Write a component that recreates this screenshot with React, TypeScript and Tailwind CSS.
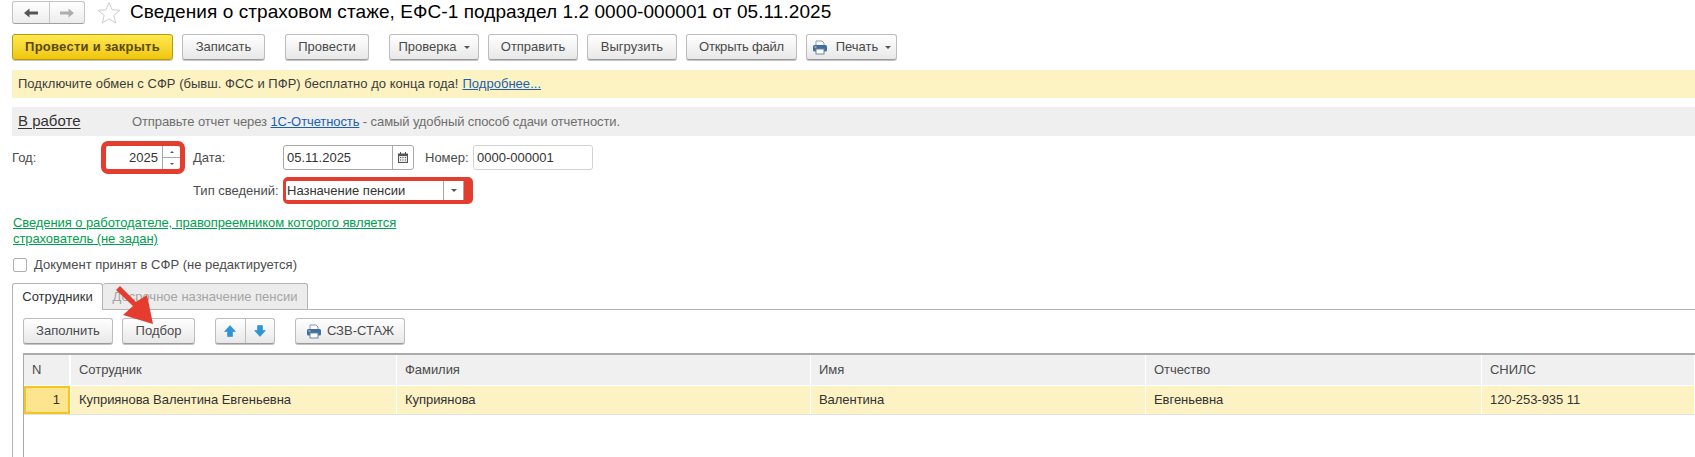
import { ReactNode } from "react";

const COLUMNS = ["Сотрудник", "Фамилия", "Имя", "Отчество", "СНИЛС"];
const ROW = ["Куприянова Валентина Евгеньевна", "Куприянова", "Валентина", "Евгеньевна", "120-253-935 11"];

function Btn({ className = "", children }: { className?: string; children: ReactNode }) {
  return (
    <div className={"flex h-[26px] shrink-0 items-center justify-center rounded-[3px] border border-[#bdbdbd] border-b-[#9a9a9a] bg-gradient-to-b from-white to-[#e8e8e8] text-[#4a4a4a] shadow-[0_1px_0_#c4c4c4] " + className}>
      {children}
    </div>
  );
}

function Caret() {
  return <span className="ml-[7px] mt-px h-0 w-0 border-x-[3px] border-t-[3px] border-x-transparent border-t-[#555]" />;
}

function PrinterIcon() {
  return (
    <svg width="16" height="15" viewBox="0 0 16 15" className="shrink-0">
      <path d="M4 1h6l2 2v3H4z" fill="#fff" stroke="#8a9bb0" />
      <rect x="1" y="5" width="14" height="6.5" rx="1.5" fill="#3f6f9f" />
      <rect x="4" y="9" width="8" height="5" fill="#fff" stroke="#6d86a3" />
      <rect x="2.5" y="6.5" width="2" height="1" fill="#cfe0ef" />
    </svg>
  );
}

function SideArrow({ left, color }: { left?: boolean; color: string }) {
  return (
    <svg width="14" height="10" viewBox="0 0 14 10" className={left ? "" : "rotate-180"}>
      <path d="M0 5 5.5 0.5V3.5H14V6.5H5.5V9.5Z" fill={color} />
    </svg>
  );
}

function VertArrow({ up }: { up?: boolean }) {
  return (
    <svg width="12" height="12" viewBox="0 0 12 12" className={up ? "" : "rotate-180"}>
      <path d="M6 0.5 11.5 6.5H8.5V11.5H3.5V6.5H0.5Z" fill="#2e94d8" stroke="#2581c4" strokeWidth="0.5" />
    </svg>
  );
}

export default function App() {
  return (
    <div className="relative flex h-[457px] w-[1695px] flex-col overflow-hidden bg-white pl-3 pt-px font-['Liberation_Sans',Arial,sans-serif] text-[13px] text-[#4b4b4b]">
      {/* Header */}
      <div className="flex h-[23px] shrink-0 items-center">
        <div className="flex h-[23px] w-[73px] rounded-[3px] border border-[#c4c4c4] border-b-[#a0a0a0] bg-gradient-to-b from-white to-[#ececec]">
          <div className="flex w-[37px] items-center justify-center border-r border-[#c8c8c8]">
            <SideArrow left color="#555555" />
          </div>
          <div className="flex flex-1 items-center justify-center">
            <SideArrow color="#aeaeae" />
          </div>
        </div>
        <svg width="24" height="23" viewBox="0 0 24 23" className="ml-[12px]">
          <path d="M12 1.5 15 8.7 22.8 9.3 16.8 14.4 18.7 22 12 17.9 5.3 22 7.2 14.4 1.2 9.3 9 8.7Z" fill="#fff" stroke="#c9ced3" />
        </svg>
        <h1 className="ml-[9px] text-[19px] font-normal tracking-[0.07px] text-black">
          Сведения о страховом стаже, ЕФС-1 подраздел 1.2 0000-000001 от 05.11.2025
        </h1>
      </div>

      {/* Toolbar */}
      <div className="mt-[10px] flex shrink-0">
        <div className="flex h-[26px] w-[161px] items-center justify-center rounded-[3px] border border-[#b39a10] bg-gradient-to-b from-[#ffe94d] to-[#f0c600] font-bold tracking-[0.25px] text-[#5a4a00] shadow-[0_1px_0_#c4c4c4]">
          Провести и закрыть
        </div>
        <Btn className="ml-[9px] w-[83px]">Записать</Btn>
        <Btn className="ml-[20px] w-[84px]">Провести</Btn>
        <Btn className="ml-[20px] w-[90px]">Проверка<Caret /></Btn>
        <Btn className="ml-[9px] w-[90px]">Отправить</Btn>
        <Btn className="ml-[9px] w-[90px]">Выгрузить</Btn>
        <Btn className="ml-[9px] w-[111px] tracking-[-0.2px]">Открыть файл</Btn>
        <Btn className="ml-[9px] w-[91px]">
          <PrinterIcon />
          <span className="ml-2">Печать</span>
          <Caret />
        </Btn>
      </div>

      {/* Notice */}
      <div className="mt-[10px] flex h-[28px] shrink-0 items-center bg-[#fdf3c2] pl-[6px] tracking-[0.03px] text-[#3c3c3c]">
        Подключите обмен с СФР (бывш. ФСС и ПФР) бесплатно до конца года!
        <span className="ml-1 text-[#1c5fb5] underline">Подробнее...</span>
      </div>

      {/* Status */}
      <div className="mt-[9px] flex h-[29px] shrink-0 items-center bg-[#efefef] pl-[6px]">
        <span className="w-[114px] text-[15px] text-[#333] underline underline-offset-2">В работе</span>
        <span className="tracking-[-0.1px] text-[#6e6e6e]">
          Отправьте отчет через <span className="text-[#1c5fb5] underline">1С-Отчетность</span> - самый удобный способ сдачи отчетности.
        </span>
      </div>

      {/* Form */}
      <div className="mt-[9px] flex h-[25px] shrink-0 items-center">
        <span className="w-[89px]">Год:</span>
        <div className="flex h-[33px] w-[84px] shrink-0 rounded-[7px] border-[5px] border-[#e53c30] bg-white">
          <span className="flex flex-1 items-center justify-end pr-1 text-[#333]">2025</span>
          <div className="flex w-[18px] flex-col border-l border-[#a8a8a8] text-[#555]">
            <div className="flex flex-1 items-center justify-center border-b border-[#a8a8a8]">
              <span className="h-0 w-0 border-x-2 border-b-2 border-x-transparent border-b-[#555]" />
            </div>
            <div className="flex flex-1 items-center justify-center">
              <span className="h-0 w-0 border-x-2 border-t-2 border-x-transparent border-t-[#555]" />
            </div>
          </div>
        </div>
        <span className="ml-[8px] w-[90px]">Дата:</span>
        <div className="flex h-[25px] w-[131px] items-center rounded-[3px] border border-[#a8a8a8] pl-[3px] text-[#333]">
          <span className="flex-1">05.11.2025</span>
          <div className="flex h-full w-[21px] items-center justify-center border-l border-[#a8a8a8]">
            <svg width="10" height="11" viewBox="0 0 10 11">
              <path d="M0 1.5h10V11H0z" fill="#555" />
              <path d="M1 4h8v6H1z" fill="#e8e8e8" />
              <path d="M2 0h1v2H2zM7 0h1v2H7zM2 5h1v1H2zM4.5 5h1v1h-1zM7 5h1v1H7zM2 7.5h1v1H2zM4.5 7.5h1v1h-1zM7 7.5h1v1H7z" fill="#555" />
            </svg>
          </div>
        </div>
        <span className="ml-[11px] w-[48px]">Номер:</span>
        <div className="flex h-[25px] w-[120px] items-center rounded-[3px] border border-[#d2d2d2] pl-[3px] text-[#333]">0000-000001</div>
      </div>
      <div className="mt-[7px] flex shrink-0 items-center pl-[181px]">
        <span className="w-[90px]">Тип сведений:</span>
        <div className="flex h-[27px] w-[190px] items-center rounded-[5px] border-y-4 border-l-[3px] border-r-[9px] border-[#e53c30] bg-white text-[#333]">
          <span className="flex-1 pl-px">Назначение пенсии</span>
          <div className="flex h-full w-[21px] items-center justify-center border-x border-[#a8a8a8]">
            <span className="h-0 w-0 border-x-[3px] border-t-[3px] border-x-transparent border-t-[#555]" />
          </div>
        </div>
      </div>
      <div className="mt-[11px] w-[390px] shrink-0 pl-px leading-[16px] tracking-[-0.08px] text-[#00a04e] underline">
        Сведения о работодателе, правопреемником которого является страхователь (не задан)
      </div>
      <div className="mt-[11px] flex h-[14px] shrink-0 items-center pl-px">
        <span className="h-[14px] w-[14px] rounded-[2px] border border-[#b0b0b0] bg-white" />
        <span className="ml-[7px]">Документ принят в СФР (не редактируется)</span>
      </div>

      {/* Tabs */}
      <div className="mt-[11px] flex h-[26px] shrink-0">
        <div className="relative z-10 flex h-[27px] w-[91px] items-center justify-center rounded-t-[3px] border border-b-0 border-[#b4b4b4] bg-white text-[#333]">Сотрудники</div>
        <div className="flex w-[205px] items-center justify-center rounded-t-[3px] border border-l-0 border-b-0 border-[#b4b4b4] bg-[#ececec] text-[#a5a5a5]">Досрочное назначение пенсии</div>
      </div>
      <div className="flex flex-1 flex-col border-l border-t border-[#b4b4b4] pl-[10px] pt-2">
        <div className="flex shrink-0">
          <Btn className="w-[90px]">Заполнить</Btn>
          <Btn className="ml-[9px] w-[73px]">Подбор</Btn>
          <Btn className="ml-[20px] w-[60px]">
            <div className="flex h-full flex-1 items-center justify-center border-r border-[#bdbdbd]"><VertArrow up /></div>
            <div className="flex h-full flex-1 items-center justify-center"><VertArrow /></div>
          </Btn>
          <Btn className="ml-[20px] w-[110px]">
            <PrinterIcon />
            <span className="ml-[5px]">СЗВ-СТАЖ</span>
          </Btn>
        </div>

        {/* Table */}
        <div className="mt-[9px] flex-1 border-l border-t-2 border-[#ababab] tracking-[-0.05px]">
          <div className="grid h-[31px] grid-cols-[47px_326px_414px_335px_336px_1fr] border-b border-white">
            <div className="flex items-center border-r-2 border-white bg-[#f0f0f0] pl-2">N</div>
            {COLUMNS.map((name) => (
              <div key={name} className="flex items-center border-r border-white bg-[#f0f0f0] pl-2">{name}</div>
            ))}
          </div>
          <div className="grid h-[29px] grid-cols-[47px_326px_414px_335px_336px_1fr] border-b border-[#e2e2e2] text-[#333]">
            <div className="mr-px flex items-center justify-end border-2 border-[#f6c51d] bg-[#fde48f] pr-2">1</div>
            {ROW.map((value) => (
              <div key={value} className="flex items-center border-r border-white bg-[#fdf2c4] pl-2">{value}</div>
            ))}
          </div>
        </div>
      </div>

      {/* Annotation arrow */}
      <svg width="50" height="50" viewBox="0 0 50 50" className="absolute left-[112px] top-[282px]">
        <path d="M4 8 8 4 24 20 35 13 41 42 11 33 21 24Z" fill="#e53c30" />
      </svg>
    </div>
  );
}
